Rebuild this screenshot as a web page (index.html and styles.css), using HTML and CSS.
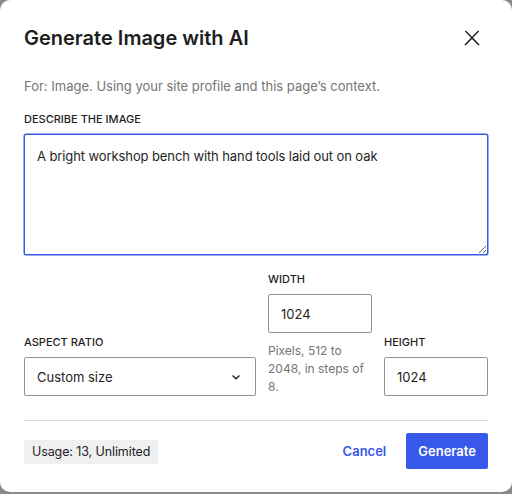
FILE: index.html
```html
<!DOCTYPE html>
<html lang="en">
<head>
<meta charset="utf-8">
<title>Generate Image with AI</title>
<link rel="stylesheet" href="styles.css">
</head>
<body>
<div class="modal">
  <div class="header">
    <h1 class="title">Generate Image with AI</h1>
    <button class="close" aria-label="Close">
      <svg width="24" height="24" viewBox="0 0 24 24"><path d="M13 11.8l6.1-6.3-1-1-6.1 6.2-6.1-6.2-1 1 6.1 6.3-6.5 6.7 1 1 6.5-6.6 6.5 6.6 1-1z" fill="#1e1e1e"/></svg>
    </button>
  </div>
  <p class="intro">For: Image. Using your site profile and this page’s context.</p>
  <label class="label">DESCRIBE THE IMAGE</label>
  <textarea class="prompt">A bright workshop bench with hand tools laid out on oak</textarea>
  <div class="fields">
    <div class="field aspect">
      <label class="label">ASPECT RATIO</label>
      <div class="select">
        <span>Custom size</span>
        <svg width="12" height="12" viewBox="0 0 12 12"><path d="M2.5 4.5L6 7.8 9.5 4.5" fill="none" stroke="#1e1e1e" stroke-width="1.3"/></svg>
      </div>
    </div>
    <div class="field dim">
      <label class="label">WIDTH</label>
      <div class="input">1024</div>
      <p class="help">Pixels, 512 to 2048, in steps of 8.</p>
    </div>
    <div class="field dim">
      <label class="label">HEIGHT</label>
      <div class="input">1024</div>
    </div>
  </div>
  <div class="footer">
    <span class="usage">Usage: 13, Unlimited</span>
    <div class="actions">
      <button class="btn link">Cancel</button>
      <button class="btn primary">Generate</button>
    </div>
  </div>
</div>
</body>
</html>
```
FILE: styles.css
```css
html, body {
  margin: 0;
  padding: 0;
  height: 100%;
  background: #8a8a8a;
}
body {
  font-family: Inter, "Noto Sans", sans-serif;
  color: #1e1e1e;
}
.modal {
  box-sizing: border-box;
  width: 512px;
  height: 492px;
  background: #fff;
  border-radius: 10px;
  padding: 0 24px;
  display: flex;
  flex-direction: column;
}
.header {
  height: 75px;
  display: flex;
  align-items: center;
  justify-content: space-between;
}
.title {
  margin: 0;
  font-size: 20px;
  font-weight: 600;
  letter-spacing: 0;
}
.close {
  border: 0;
  background: none;
  padding: 0;
  width: 24px;
  height: 24px;
  margin-right: 4px;
  margin-top: 1px;
}
.close svg { display: block; }
.intro {
  margin: 1px 0 0;
  font-size: 13px;
  line-height: 20px;
  color: #757575;
}
.label {
  display: block;
  font-size: 11px;
  font-weight: 500;
  line-height: 16px;
  margin-bottom: 7px;
}
.intro + .label { margin-top: 15px; }
.prompt {
  box-sizing: border-box;
  display: block;
  width: 464px;
  height: 121px;
  margin: 0;
  padding: 11px 12px;
  border: 1px solid #3858e9;
  box-shadow: 0 0 0 0.5px #3858e9;
  border-radius: 2px;
  font-family: inherit;
  font-size: 13px;
  letter-spacing: -0.1px;
  line-height: 20px;
  color: #1e1e1e;
  outline: none;
}
.fields {
  margin-top: 16px;
  display: flex;
  align-items: flex-end;
  gap: 12px;
}
.aspect { flex: 1; }
.dim { width: 104px; }
.select, .input {
  box-sizing: border-box;
  height: 39px;
  border: 1px solid #949494;
  border-radius: 2px;
  display: flex;
  align-items: center;
  font-size: 13px;
}
.select {
  justify-content: space-between;
  padding: 0 13px 0 12px;
}
.select svg { display: block; }
.input { padding: 0 12px; }
.help {
  margin: 9px 0 0;
  font-size: 12px;
  line-height: 18px;
  color: #757575;
  height: 54px;
}
.footer {
  margin-top: 24px;
  border-top: 1px solid #dcdcdc;
  padding-top: 12px;
  display: flex;
  align-items: center;
  justify-content: space-between;
}
.usage {
  background: #f0f0f0;
  font-size: 12.5px;
  letter-spacing: -0.1px;
  line-height: 24px;
  padding: 0 8px;
  margin-top: 1px;
}
.actions {
  display: flex;
  align-items: center;
  gap: 8px;
}
.btn {
  font-family: inherit;
  font-size: 13px;
  font-weight: 600;
  border: 0;
  border-radius: 2px;
  height: 36px;
  padding: 0 12px;
  cursor: pointer;
}
.link {
  background: none;
  color: #3858e9;
}
.primary {
  background: #3858e9;
  color: #fff;
}
```
